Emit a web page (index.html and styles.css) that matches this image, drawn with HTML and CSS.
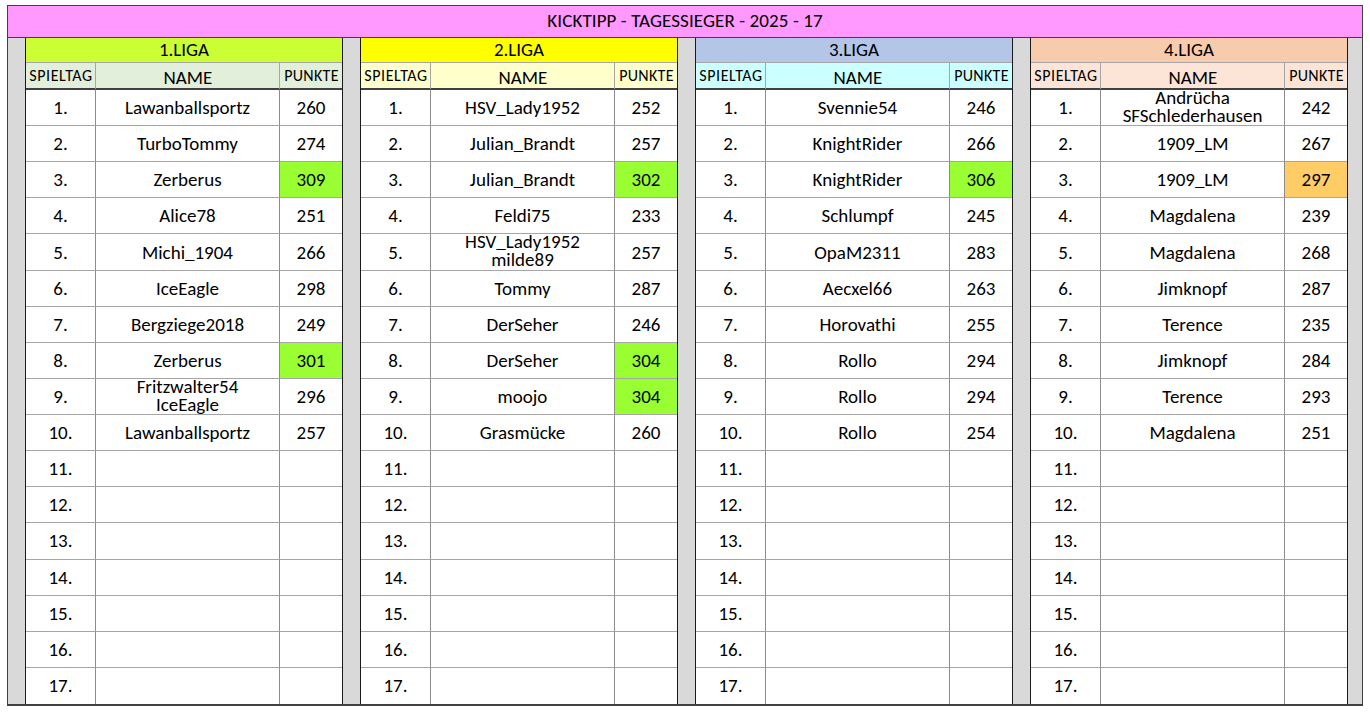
FILE: index.html
```html
<!DOCTYPE html>
<html lang="de">
<head>
<meta charset="utf-8">
<title>KICKTIPP - TAGESSIEGER - 2025 - 17</title>
<link rel="stylesheet" href="styles.css">
</head>
<body>
<div class="sheet">
  <div class="title">KICKTIPP - TAGESSIEGER - 2025 - 17</div>
  <div class="board">
    <div class="gap first"></div>
    <div class="league l1">
      <div class="lhead">1.LIGA</div>
      <div class="sh c1">SPIELTAG</div><div class="sh c2 big">NAME</div><div class="sh c3">PUNKTE</div>
      <div class="c c1">1.</div><div class="c c2">Lawanballsportz</div><div class="c c3">260</div>
      <div class="c c1">2.</div><div class="c c2">TurboTommy</div><div class="c c3">274</div>
      <div class="c c1">3.</div><div class="c c2">Zerberus</div><div class="c c3 win">309</div>
      <div class="c c1">4.</div><div class="c c2">Alice78</div><div class="c c3">251</div>
      <div class="c c1">5.</div><div class="c c2">Michi_1904</div><div class="c c3">266</div>
      <div class="c c1">6.</div><div class="c c2">IceEagle</div><div class="c c3">298</div>
      <div class="c c1">7.</div><div class="c c2">Bergziege2018</div><div class="c c3">249</div>
      <div class="c c1">8.</div><div class="c c2">Zerberus</div><div class="c c3 win">301</div>
      <div class="c c1">9.</div><div class="c c2 two">Fritzwalter54<br>IceEagle</div><div class="c c3">296</div>
      <div class="c c1">10.</div><div class="c c2">Lawanballsportz</div><div class="c c3">257</div>
      <div class="c c1">11.</div><div class="c c2"></div><div class="c c3"></div>
      <div class="c c1">12.</div><div class="c c2"></div><div class="c c3"></div>
      <div class="c c1">13.</div><div class="c c2"></div><div class="c c3"></div>
      <div class="c c1">14.</div><div class="c c2"></div><div class="c c3"></div>
      <div class="c c1">15.</div><div class="c c2"></div><div class="c c3"></div>
      <div class="c c1">16.</div><div class="c c2"></div><div class="c c3"></div>
      <div class="c c1 last">17.</div><div class="c c2 last"></div><div class="c c3 last"></div>
    </div>
    <div class="gap"></div>
    <div class="league l2">
      <div class="lhead">2.LIGA</div>
      <div class="sh c1">SPIELTAG</div><div class="sh c2 big">NAME</div><div class="sh c3">PUNKTE</div>
      <div class="c c1">1.</div><div class="c c2">HSV_Lady1952</div><div class="c c3">252</div>
      <div class="c c1">2.</div><div class="c c2">Julian_Brandt</div><div class="c c3">257</div>
      <div class="c c1">3.</div><div class="c c2">Julian_Brandt</div><div class="c c3 win">302</div>
      <div class="c c1">4.</div><div class="c c2">Feldi75</div><div class="c c3">233</div>
      <div class="c c1">5.</div><div class="c c2 two">HSV_Lady1952<br>milde89</div><div class="c c3">257</div>
      <div class="c c1">6.</div><div class="c c2">Tommy</div><div class="c c3">287</div>
      <div class="c c1">7.</div><div class="c c2">DerSeher</div><div class="c c3">246</div>
      <div class="c c1">8.</div><div class="c c2">DerSeher</div><div class="c c3 win">304</div>
      <div class="c c1">9.</div><div class="c c2">moojo</div><div class="c c3 win">304</div>
      <div class="c c1">10.</div><div class="c c2">Grasmücke</div><div class="c c3">260</div>
      <div class="c c1">11.</div><div class="c c2"></div><div class="c c3"></div>
      <div class="c c1">12.</div><div class="c c2"></div><div class="c c3"></div>
      <div class="c c1">13.</div><div class="c c2"></div><div class="c c3"></div>
      <div class="c c1">14.</div><div class="c c2"></div><div class="c c3"></div>
      <div class="c c1">15.</div><div class="c c2"></div><div class="c c3"></div>
      <div class="c c1">16.</div><div class="c c2"></div><div class="c c3"></div>
      <div class="c c1 last">17.</div><div class="c c2 last"></div><div class="c c3 last"></div>
    </div>
    <div class="gap"></div>
    <div class="league l3">
      <div class="lhead">3.LIGA</div>
      <div class="sh c1">SPIELTAG</div><div class="sh c2 big">NAME</div><div class="sh c3">PUNKTE</div>
      <div class="c c1">1.</div><div class="c c2">Svennie54</div><div class="c c3">246</div>
      <div class="c c1">2.</div><div class="c c2">KnightRider</div><div class="c c3">266</div>
      <div class="c c1">3.</div><div class="c c2">KnightRider</div><div class="c c3 win">306</div>
      <div class="c c1">4.</div><div class="c c2">Schlumpf</div><div class="c c3">245</div>
      <div class="c c1">5.</div><div class="c c2">OpaM2311</div><div class="c c3">283</div>
      <div class="c c1">6.</div><div class="c c2">Aecxel66</div><div class="c c3">263</div>
      <div class="c c1">7.</div><div class="c c2">Horovathi</div><div class="c c3">255</div>
      <div class="c c1">8.</div><div class="c c2">Rollo</div><div class="c c3">294</div>
      <div class="c c1">9.</div><div class="c c2">Rollo</div><div class="c c3">294</div>
      <div class="c c1">10.</div><div class="c c2">Rollo</div><div class="c c3">254</div>
      <div class="c c1">11.</div><div class="c c2"></div><div class="c c3"></div>
      <div class="c c1">12.</div><div class="c c2"></div><div class="c c3"></div>
      <div class="c c1">13.</div><div class="c c2"></div><div class="c c3"></div>
      <div class="c c1">14.</div><div class="c c2"></div><div class="c c3"></div>
      <div class="c c1">15.</div><div class="c c2"></div><div class="c c3"></div>
      <div class="c c1">16.</div><div class="c c2"></div><div class="c c3"></div>
      <div class="c c1 last">17.</div><div class="c c2 last"></div><div class="c c3 last"></div>
    </div>
    <div class="gap"></div>
    <div class="league l4">
      <div class="lhead">4.LIGA</div>
      <div class="sh c1">SPIELTAG</div><div class="sh c2 big">NAME</div><div class="sh c3">PUNKTE</div>
      <div class="c c1">1.</div><div class="c c2 two">Andrücha<br>SFSchlederhausen</div><div class="c c3">242</div>
      <div class="c c1">2.</div><div class="c c2">1909_LM</div><div class="c c3">267</div>
      <div class="c c1">3.</div><div class="c c2">1909_LM</div><div class="c c3 gold">297</div>
      <div class="c c1">4.</div><div class="c c2">Magdalena</div><div class="c c3">239</div>
      <div class="c c1">5.</div><div class="c c2">Magdalena</div><div class="c c3">268</div>
      <div class="c c1">6.</div><div class="c c2">Jimknopf</div><div class="c c3">287</div>
      <div class="c c1">7.</div><div class="c c2">Terence</div><div class="c c3">235</div>
      <div class="c c1">8.</div><div class="c c2">Jimknopf</div><div class="c c3">284</div>
      <div class="c c1">9.</div><div class="c c2">Terence</div><div class="c c3">293</div>
      <div class="c c1">10.</div><div class="c c2">Magdalena</div><div class="c c3">251</div>
      <div class="c c1">11.</div><div class="c c2"></div><div class="c c3"></div>
      <div class="c c1">12.</div><div class="c c2"></div><div class="c c3"></div>
      <div class="c c1">13.</div><div class="c c2"></div><div class="c c3"></div>
      <div class="c c1">14.</div><div class="c c2"></div><div class="c c3"></div>
      <div class="c c1">15.</div><div class="c c2"></div><div class="c c3"></div>
      <div class="c c1">16.</div><div class="c c2"></div><div class="c c3"></div>
      <div class="c c1 last">17.</div><div class="c c2 last"></div><div class="c c3 last"></div>
    </div>
    <div class="gap end"></div>
  </div>
</div>
</body>
</html>
```
FILE: styles.css
```css
* { box-sizing: border-box; }
html, body { margin: 0; padding: 0; background: #ffffff; }
body {
  font-family: "Carlito", "Lato", "Liberation Sans", sans-serif;
  color: #000;
}
.sheet {
  margin: 5px 0 0 7px;
  width: 1356px;
  border: 1px solid #404040;
  border-bottom-width: 2px;
}
.title {
  height: 32px;
  background: #ff99ff;
  border-bottom: 1px solid #404040;
  display: flex;
  align-items: center;
  justify-content: center;
  font-size: 19px;
  letter-spacing: 0.1px;
  padding-bottom: 2px;
}
.board {
  display: flex;
  height: 666px;
}
.gap {
  width: 17px;
  background: #d9d9d9;
}
.gap.end { flex: 1; }
.league {
  width: 318px;
  border-left: 1px solid #1a1a1a;
  border-right: 1px solid #1a1a1a;
  display: grid;
  grid-template-columns: 70px 184px 62px;
  grid-template-rows: 25px 27px repeat(17, minmax(0, 1fr));
}
.lhead {
  grid-column: 1 / 4;
  display: flex;
  align-items: center;
  justify-content: center;
  font-size: 19px;
  padding-bottom: 1px;
  border-bottom: 1px solid #a6a6a6;
}
.sh {
  display: flex;
  align-items: center;
  justify-content: center;
  font-size: 16px;
  letter-spacing: 0.3px;
  padding-left: 1px;
  border-bottom: 2px solid #404040;
  border-right: 1px solid #a6a6a6;
}
.sh.c1 { letter-spacing: 0.6px; }
.sh.big { font-size: 19px; letter-spacing: 0; padding-top: 3px; }
.sh.c3, .c.c3 { border-right: none; }
.c {
  display: flex;
  align-items: center;
  justify-content: center;
  text-align: center;
  font-size: 19px;
  line-height: 18px;
  padding-top: 1px;
  background: #fff;
  border-bottom: 1px solid #a6a6a6;
  border-right: 1px solid #8c8c8c;
}
.c.last { border-bottom: none; }
.c.two { line-height: 18px; padding-top: 0; padding-bottom: 2px; }
.c.win { background: #99ff33; }
.c.gold { background: #ffcc66; }
.l1 .lhead { background: #ccff33; }
.l1 .sh { background: #e2efda; }
.l2 .lhead { background: #ffff00; }
.l2 .sh { background: #ffffcc; }
.l3 .lhead { background: #b4c6e7; }
.l3 .sh { background: #ccffff; }
.l4 .lhead { background: #f8cbad; }
.l4 .sh { background: #fce4d6; }
```
